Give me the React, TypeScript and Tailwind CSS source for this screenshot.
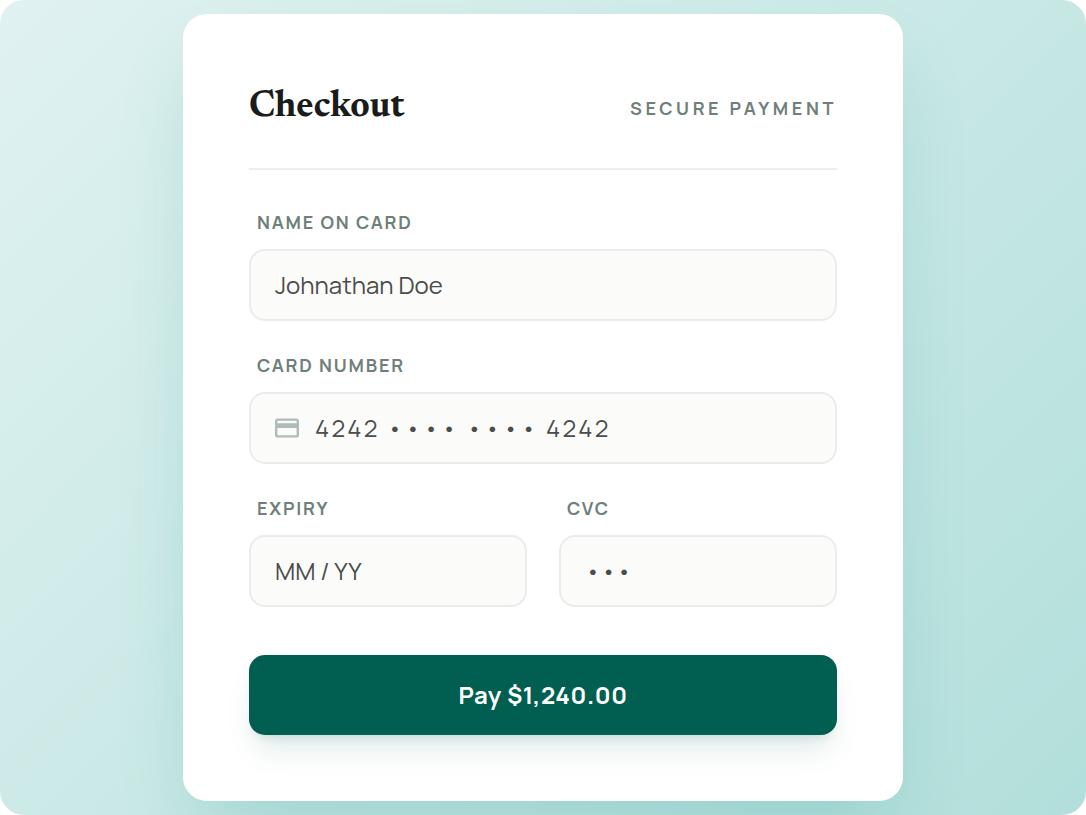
import type { InputHTMLAttributes, ReactNode } from "react";

type FieldProps = InputHTMLAttributes<HTMLInputElement> & {
  id: string;
  label: string;
  icon?: ReactNode;
};

function CardIcon() {
  return (
    <svg viewBox="2 4 20 16" className="h-5 w-6 shrink-0 fill-[#b0bab8]" aria-hidden="true">
      <path d="M20 4H4c-1.11 0-1.99.89-1.99 2L2 18c0 1.11.89 2 2 2h16c1.11 0 2-.89 2-2V6c0-1.11-.89-2-2-2zm0 14H4v-6h16v6zm0-10H4V6h16v2z" />
    </svg>
  );
}

function Field({ id, label, icon, className = "", ...rest }: FieldProps) {
  return (
    <div className="flex min-w-0 flex-col gap-3.5">
      <label htmlFor={id} className="px-2 text-lg leading-[25px] font-bold tracking-widest text-[#6f7f7a] uppercase">
        {label}
      </label>
      <div className="flex h-18 items-center gap-4 rounded-2xl border-2 border-[#e8edec] bg-[#fbfbf9] px-6">
        {icon}
        <input
          id={id}
          className={`w-full min-w-0 bg-transparent text-2xl font-normal text-[#4a4d4b] outline-none ${className}`}
          {...rest}
        />
      </div>
    </div>
  );
}

export default function App() {
  return (
    <main className="flex min-h-screen items-center justify-center overflow-hidden rounded-3xl bg-linear-135 from-[#e0f2f1] to-[#b2dfdb] p-3.5 font-['Manrope','Inter',sans-serif]">
      <form
        className="flex w-full max-w-[720px] flex-col gap-8 rounded-3xl border-2 border-white bg-white p-16 shadow-[0_40px_80px_-16px_rgba(0,137,123,0.2)]"
        onSubmit={(e) => e.preventDefault()}
      >
        <header className="mb-2 flex items-center justify-between border-b-2 border-[#eaefee] pt-1 pb-9">
          <h1 className="font-['Newsreader','Spectral','Liberation_Serif',serif] text-[37px] leading-[48px] font-bold text-[#1a1c1b]">
            Checkout
          </h1>
          <span className="text-lg leading-[25px] font-bold tracking-[0.2em] text-[#6f7f7a] uppercase">
            Secure Payment
          </span>
        </header>
        <Field id="name" label="Name on card" defaultValue="Johnathan Doe" />
        <Field
          id="number"
          label="Card number"
          icon={<CardIcon />}
          defaultValue="4242 •••• •••• 4242"
          className="tracking-widest"
        />
        <div className="grid grid-cols-2 gap-8">
          <Field id="expiry" label="Expiry" defaultValue="MM / YY" />
          <Field id="cvc" label="CVC" defaultValue="•••" />
        </div>
        <button
          type="submit"
          className="mt-4 h-20 rounded-2xl bg-[#005f50] text-2xl font-bold tracking-wide text-white shadow-[0_20px_30px_-6px_rgba(0,95,80,0.12),0_8px_12px_-8px_rgba(0,95,80,0.2)]"
        >
          Pay $1,240.00
        </button>
      </form>
    </main>
  );
}
